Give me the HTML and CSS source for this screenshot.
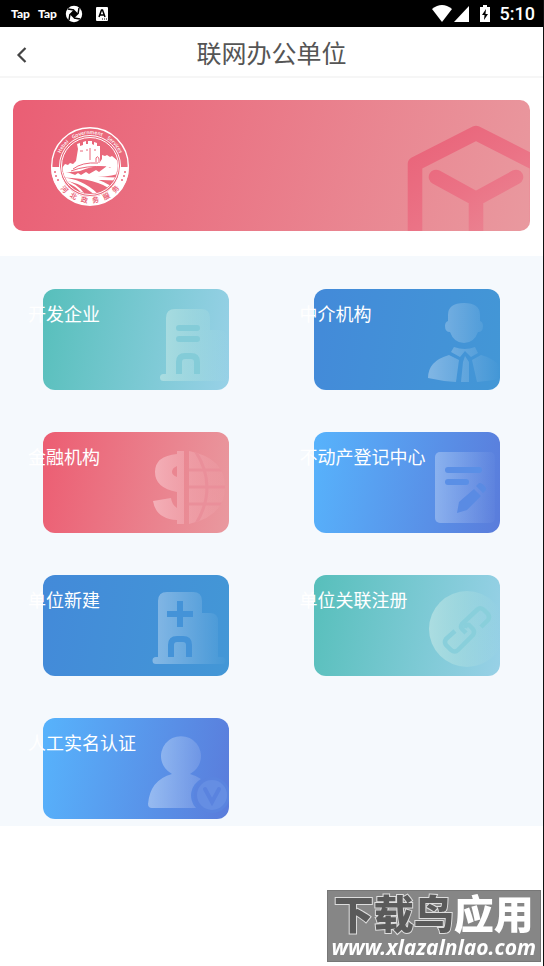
FILE: index.html
```html
<!DOCTYPE html>
<html lang="zh-CN">
<head>
    <meta charset="UTF-8">
    <meta name="viewport" content="width=device-width, initial-scale=1.0">
    <title>联网办公单位</title>
    <link rel="stylesheet" href="styles.css">
</head>
<body>
    <div class="status-bar">
        <div class="status-left">
            <span class="tap">Tap</span>
            <span class="tap">Tap</span>
            <svg width="18" height="18" viewBox="0 0 18 18">
                <circle cx="9" cy="9" r="8.2" fill="#fff"/>
                <path d="M9 4.500L13.500 9L9 13.500L4.500 9Z" fill="#000"/>
                <path d="M9 5L3 4M13 9L14 3M9 13L15 14M5 9L4 15" fill="none" stroke="#000" stroke-width="1.500"/>
            </svg>
            <svg class="app-a" width="12" height="14" viewBox="0 0 12 14">
                <rect width="12" height="14" rx="1" fill="#fff"/>
                <path d="M3 10L5.500 3H6.500L9 10M4 8H8" fill="none" stroke="#000" stroke-width="1.500"/>
                <path d="M6 12H11" stroke="#000" stroke-dasharray="1 1"/>
            </svg>
        </div>
        <div class="status-right">
            <svg width="38" height="17" viewBox="0 0 38 17">
                <path d="M0 4Q10 -4 20 4L10 17Z" fill="#fff"/>
                <path d="M37 1V17H22Z" fill="#fff"/>
            </svg>
            <svg width="12" height="18" viewBox="0 0 12 18">
                <path d="M1 2H4V0H8V2H11V17H1Z" fill="#fff"/>
                <path d="M7 4L3 10H5.500L5 15L9 9H6.500Z" fill="#000"/>
            </svg>
            <span class="clock">5:10</span>
        </div>
    </div>

    <header class="header">
        <button class="back-btn" aria-label="返回">
            <svg width="12" height="18" viewBox="0 0 12 18">
                <path d="M9.500 2L2.500 9L9.500 16" fill="none" stroke="#444" stroke-width="2.200"/>
            </svg>
        </button>
        <h1>联网办公单位</h1>
    </header>

    <div class="banner">
        <svg class="emblem" width="80" height="80" viewBox="-40 -40 80 80">
            <defs>
                <path id="arcTop" d="M-32 0A32 32 0 0 1 32 0"/>
                <path id="arcBottom" d="M-37 0A37 37 0 0 0 37 0"/>
                <clipPath id="inner"><circle r="27.500"/></clipPath>
            </defs>
            <circle r="38.300" fill="none" stroke="#fff" stroke-width="1.400"/>
            <path d="M-39 1A39 39 0 0 0 39 1H30A30 30 0 0 1 -30 1Z" fill="#fff"/>
            <circle r="30.500" fill="none" stroke="#fff" stroke-width="1"/>
            <circle r="28.500" fill="none" stroke="#fff" stroke-width="1"/>
            <g clip-path="url(#inner)">
                <path d="M-28 2L-25 -2L-22 -1L-20 -3L-17 -2L-14 -5L-12 -17L-13 -22L-10 -23V-20L-7 -21V-24L-4 -25V-22H-2V-25H2V-22L4 -21V-24L7 -23V-20L10 -20V-4L12 -7V-11L15 -10L17 -11L20 -9L22 -10L28 -5V4Q10 -4 -10 5L-28 7Z" fill="#fff"/>
                <path d="M0 -18V-6M6 -4V-8Q8 -11 9 -7V-3M-10 -15H-7M-4 -16H-2M4 -16H6M-17 3Q-8 -4 8 -3M-19 5Q-4 -1 16 1" fill="none" stroke="#ea667b"/>
                <path d="M-29 5L-20 7L-15 9L-12 7L-9 9L-4 6L-1 8L6 4L9 6L17 0L20 2L28 -4V8Q5 14 -29 9Z" fill="#fff"/>
                <path d="M-28 13Q-8 14 8 30M-26 10Q8 11 22 23M-20 10Q10 13 29 13" fill="none" stroke="#fff" stroke-width="3"/>
                <path d="M-25 15Q-12 19 -5 30" fill="none" stroke="#fff" stroke-width="2"/>
            </g>
            <g fill="#ea667b">
                <circle cx="-35" cy="6" r="1"/><circle cx="-34" cy="10" r="1"/><circle cx="-32" cy="14" r="1"/>
                <circle cx="35" cy="6" r="1"/><circle cx="34" cy="10" r="1"/><circle cx="32" cy="14" r="1"/>
            </g>
            <text class="emblem-en"><textPath href="#arcTop" startOffset="50%" text-anchor="middle">Hebei &#160; &#160;Government &#160; &#160;Services</textPath></text>
            <text class="emblem-cn"><textPath href="#arcBottom" startOffset="50%" text-anchor="middle">河 &#160; 北 &#160; 政 &#160; 务 &#160; 服 &#160; 务</textPath></text>
        </svg>
        <svg class="cube" width="123" height="131" viewBox="394 0 123 131">
            <defs>
                <linearGradient id="cubeFill" gradientUnits="userSpaceOnUse" x1="410" y1="30" x2="500" y2="150">
                    <stop offset="0" stop-color="#e96379"/>
                    <stop offset="0.500" stop-color="#eb7386"/>
                    <stop offset="1" stop-color="#ea8b97"/>
                </linearGradient>
            </defs>
            <g fill="none" stroke="url(#cubeFill)" stroke-width="14.600" stroke-linejoin="round" stroke-linecap="round">
                <path d="M402 145V64L463 33L524 64V145"/>
                <path d="M423 77L463 99L503 77M463 99V145" stroke-linejoin="miter"/>
            </g>
        </svg>
    </div>

    <main class="menu">
        <a class="menu-item" href="#">
            <svg class="card teal" viewBox="0 0 186 101">
                <defs>
                    <linearGradient id="tealFade" gradientUnits="userSpaceOnUse" x1="116" y1="0" x2="186" y2="0">
                        <stop offset="0" stop-color="#abdde1"/>
                        <stop offset="1" stop-color="#abdde1" stop-opacity="0"/>
                    </linearGradient>
                </defs>
                <path d="M120.500 85H123V29Q123 20 132 20H158Q167 20 167 29V41H176Q184 41 184 49V85H186V92H120.500A3.500 3.500 0 0 1 120.500 85Z" fill="url(#tealFade)"/>
                <path d="M136 39H154M136 50H154" stroke="#84ccd8" stroke-width="6" stroke-linecap="round"/>
                <path d="M136 85V73Q136 67 142 67H148Q154 67 154 73V85" fill="none" stroke="#84ccd8" stroke-width="6"/>
            </svg>
            <span class="label">开发企业</span>
        </a>
        <a class="menu-item" href="#">
            <svg class="card blue" viewBox="0 0 186 101">
                <defs>
                    <linearGradient id="blueFade" gradientUnits="userSpaceOnUse" x1="108" y1="0" x2="186" y2="0">
                        <stop offset="0" stop-color="#fff" stop-opacity="0.360"/>
                        <stop offset="1" stop-color="#fff" stop-opacity="0"/>
                    </linearGradient>
                </defs>
                <g fill="url(#blueFade)">
                    <path d="M134 32V26Q134 14 150 14Q166 14 166 26V32Q169 33 169 37Q169 43 164 43Q160 54 150 54Q140 54 136 43Q131 43 131 37Q131 33 134 32Z"/>
                    <path d="M140 58Q151 62 161 58L164 64L157 68L151 62L146 68L137 63Z"/>
                    <path d="M135 66L145 71L142 93Q127 92 114 89Q114 72 135 66Z"/>
                    <path d="M151 67L155 73V93H147L149 73Z"/>
                    <path d="M158 71L167 66Q184 71 186 80V90Q174 92 163 93Z"/>
                </g>
            </svg>
            <span class="label">中介机构</span>
        </a>
        <a class="menu-item" href="#">
            <svg class="card red" viewBox="0 0 186 101">
                <defs>
                    <linearGradient id="redFade" gradientUnits="userSpaceOnUse" x1="108" y1="0" x2="186" y2="0">
                        <stop offset="0" stop-color="#f4b1b9"/>
                        <stop offset="1" stop-color="#f0a5ad" stop-opacity="0.100"/>
                    </linearGradient>
                    <clipPath id="half"><path d="M146 19V92Q182 84 182 55Q182 26 146 19Z"/></clipPath>
                </defs>
                <path d="M134 19H141V92H134V88Q113 87 110 69L128 66Q129 73 134 76V60Q112 56 112 40Q112 24 134 22ZM134 34Q129 36 129 40Q129 43 134 45Z" fill="url(#redFade)" fill-rule="evenodd"/>
                <g clip-path="url(#half)">
                    <rect x="146" y="19" width="38" height="74" fill="url(#redFade)"/>
                    <path d="M146 38H184M146 55H184M146 72H184M151 17Q177 55 151 95" fill="none" stroke="#ea8f9a" stroke-width="3"/>
                </g>
            </svg>
            <span class="label">金融机构</span>
        </a>
        <a class="menu-item" href="#">
            <svg class="card azure" viewBox="0 0 186 101">
                <rect x="121" y="20" width="60" height="71" rx="5" fill="url(#blueFade)"/>
                <path d="M134 38H165M134 50H152" stroke="#5a8fe6" stroke-width="6" stroke-linecap="round"/>
                <path d="M143 81L145 70L160 57L167 64L153 78ZM162 54L165 51Q169 51 172 56V58L169 61Z" fill="#5a8be3"/>
            </svg>
            <span class="label">不动产登记中心</span>
        </a>
        <a class="menu-item" href="#">
            <svg class="card blue" viewBox="0 0 186 101">
                <path d="M113 82H115V26Q115 17 124 17H150Q159 17 159 26V38H167Q175 38 175 46V82H179A3.500 3.500 0 0 1 179 89H113A3.500 3.500 0 0 1 113 82Z" fill="url(#blueFade)"/>
                <path d="M124 39H150M137 26V52" stroke="#4493d8" stroke-width="6"/>
                <path d="M128 82V70Q128 64 134 64H140Q146 64 146 70V82" fill="none" stroke="#4493d8" stroke-width="6"/>
            </svg>
            <span class="label">单位新建</span>
        </a>
        <a class="menu-item" href="#">
            <svg class="card teal" viewBox="0 0 186 101">
                <circle cx="153" cy="54" r="38" fill="url(#tealFade)"/>
                <g fill="none" stroke="#89cfdb" stroke-width="4.500" stroke-linecap="butt" stroke-linejoin="round">
                    <path d="M167 52L174 45Q176 42 174 39L170 35Q167 32 164 34L148 49Q146 52 148 54L152 58"/>
                    <path d="M141 56L132 64Q130 67 132 70L137 75Q141 78 144 75L159 60Q161 57 159 54L155 50Q152 49 151 53"/>
                </g>
            </svg>
            <span class="label">单位关联注册</span>
        </a>
        <a class="menu-item" href="#">
            <svg class="card azure" viewBox="0 0 186 101">
                <path d="M129 56A20 20 0 1 1 147 56Q154 58 158 61A18.500 18.500 0 0 0 153 90H109Q105 90 105 86Q107 62 129 56Z" fill="url(#blueFade)"/>
                <circle cx="169" cy="77" r="18" fill="#5a84df"/>
                <circle cx="169" cy="77" r="15" fill="#658ee3"/>
                <path d="M162 71L169 84L176 71" fill="none" stroke="#5a83df" stroke-width="4" stroke-linecap="round"/>
            </svg>
            <span class="label">人工实名认证</span>
        </a>
    </main>

    <div class="watermark">
        <div class="mark-name"><span class="mark-dark">下载鸟</span>应用</div>
        <div class="mark-url">www.xlazalnlao.com</div>
    </div>
</body>
</html>
```

FILE: styles.css
```css
* {
    box-sizing: border-box;
}
body {
    margin: 0;
    min-height: 100vh;
    background: #fff;
    border-right: 1px solid #111;
    font-family: Roboto, "Noto Sans CJK SC", sans-serif;
}
svg {
    display: block;
}

/* status bar */
.status-bar {
    display: flex;
    justify-content: space-between;
    align-items: center;
    height: 27px;
    padding: 0 8px 0 11px;
    background: #000;
    color: #fff;
}
.status-left {
    display: flex;
    align-items: center;
    gap: 8px;
}
.tap {
    font-family: Lato, sans-serif;
    font-size: 12px;
    font-weight: 900;
    line-height: 24px;
}
.app-a {
    margin-left: 5px;
}
.status-right {
    display: flex;
    align-items: center;
    gap: 9px;
}
.clock {
    font-size: 18px;
    font-weight: 500;
    line-height: 27px;
}

/* header */
.header {
    display: grid;
    grid-template-columns: 44px 1fr 44px;
    align-items: center;
    height: 51px;
    padding-top: 6px;
    border-bottom: 2px solid #f6f6f6;
}
.back-btn {
    display: flex;
    justify-content: center;
    padding: 10px;
    background: none;
    border: none;
    cursor: pointer;
}
.header h1 {
    margin: 0;
    text-align: center;
    font-size: 25px;
    font-weight: 400;
    line-height: 36px;
    color: #555;
}

/* banner */
.banner {
    display: flex;
    justify-content: space-between;
    align-items: center;
    height: 131px;
    margin: 22px 13px 25px;
    padding-left: 37px;
    border-radius: 10px;
    overflow: hidden;
    background: linear-gradient(105deg, #ea5e74, #e9999f);
}
.emblem-en {
    font-family: "Open Sans", sans-serif;
    font-size: 5px;
    font-weight: 600;
    fill: #fff;
}
.emblem-cn {
    font-size: 7px;
    font-weight: 700;
    fill: #ea667b;
}

/* menu */
.menu {
    display: grid;
    grid-template-columns: 1fr 1fr;
    row-gap: 42px;
    padding: 33px 0 7px;
    background: #f5f9fd;
}
.menu-item {
    position: relative;
    display: flex;
    justify-content: center;
    color: #fff;
    text-decoration: none;
}
.card {
    width: 186px;
    height: 101px;
    border-radius: 12px;
}
.label {
    position: absolute;
    top: 12px;
    left: 28px;
    font-size: 18px;
    line-height: 28px;
}
.teal {
    background: linear-gradient(100deg, #57bfbb, #98d1e7);
}
.blue {
    background: linear-gradient(100deg, #438ad9, #4397d6);
}
.red {
    background: linear-gradient(100deg, #ec5d72, #e9999f);
}
.azure {
    background: linear-gradient(100deg, #57b3fc, #5a7cdb);
}

/* watermark */
.watermark {
    position: fixed;
    right: 3px;
    bottom: 4px;
    padding: 0 4px;
    background: #868686;
    border: 1px solid #777;
    color: #fff;
    text-align: center;
    white-space: nowrap;
}
.mark-name {
    font-family: "Noto Sans CJK SC", sans-serif;
    font-size: 40px;
    font-weight: 900;
    line-height: 42px;
}
.mark-dark {
    color: #5a5a5a;
    -webkit-text-stroke: 2px #ddd;
    paint-order: stroke fill;
}
.mark-url {
    font-family: "Noto Sans", sans-serif;
    font-size: 21px;
    font-weight: 700;
    font-style: italic;
    line-height: 28px;
}
```
